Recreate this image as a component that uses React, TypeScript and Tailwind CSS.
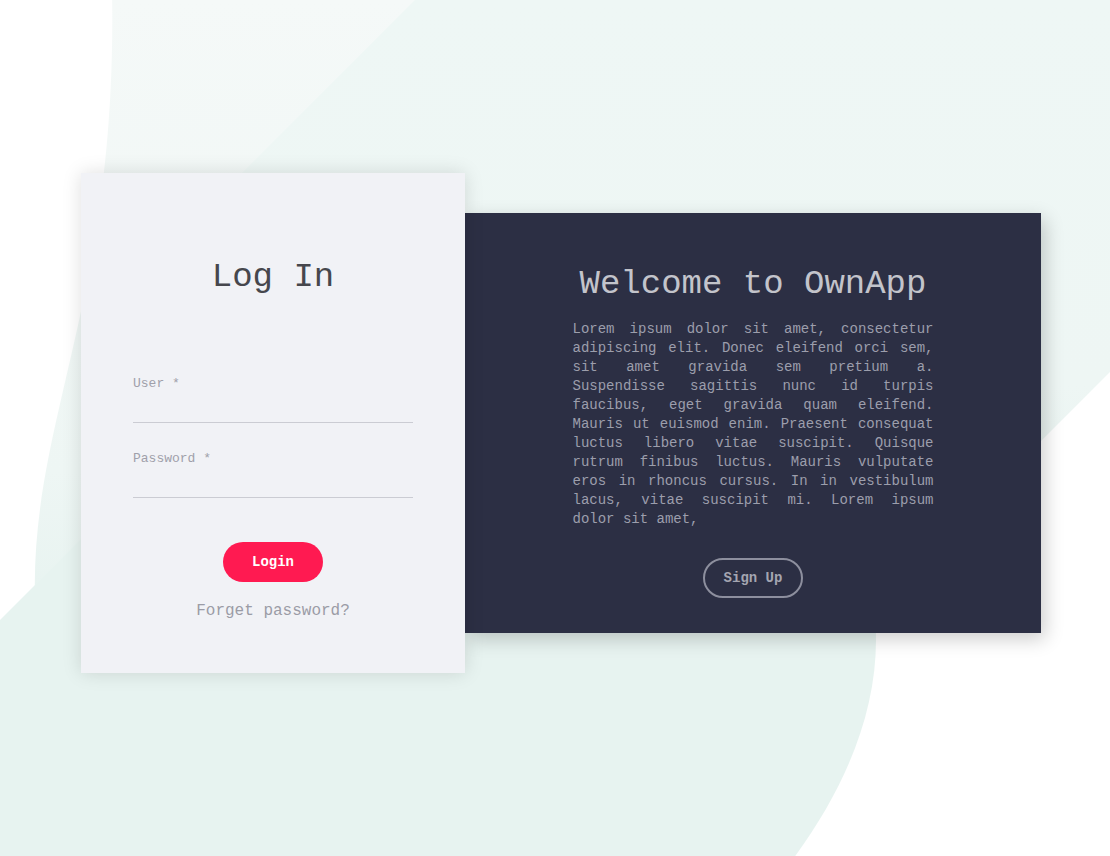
const mono = "font-['Liberation_Mono','DejaVu_Sans_Mono',monospace]"

function Backdrop() {
  return (
    <svg
      className="absolute inset-0 w-full h-full"
      viewBox="0 0 1110 856"
      preserveAspectRatio="none"
    >
      <defs>
        <linearGradient id="blob" gradientUnits="userSpaceOnUse" x1="0" y1="0" x2="0" y2="856">
          <stop offset="0" stopColor="#f5f9f8" />
          <stop offset="0.55" stopColor="#eef6f4" />
          <stop offset="0.72" stopColor="#e7f3f0" />
          <stop offset="1" stopColor="#e7f3f0" />
        </linearGradient>
        <linearGradient id="band" gradientUnits="userSpaceOnUse" x1="0" y1="0" x2="0" y2="856">
          <stop offset="0" stopColor="#eef7f5" />
          <stop offset="0.45" stopColor="#eef6f4" />
          <stop offset="0.62" stopColor="#e7f3f0" />
          <stop offset="1" stopColor="#e7f3f0" />
        </linearGradient>
      </defs>
      <path
        d="M112 -10 C118 300 30 420 35 600 L 0 900 L 760 900 C 830 820 876 730 876 640 C 876 400 800 200 700 -10 Z"
        fill="url(#blob)"
      />
      <polygon
        points="415,0 1110,0 1110,372 626,856 0,856 0,620 85,535 240,175"
        fill="url(#band)"
      />
    </svg>
  )
}

function Field({ label }: { label: string }) {
  return (
    <label className="block">
      <span className="block text-[13px] leading-4 text-[#a0a0aa]">
        {label} <span>*</span>
      </span>
      <input className="block w-full h-[31px] bg-transparent outline-none border-b border-[#cbccd3] text-[14px] text-[#444]" />
    </label>
  )
}

export default function App() {
  return (
    <div className={`relative w-full h-[856px] overflow-hidden bg-white ${mono}`}>
      <Backdrop />

      <div className="relative flex items-center h-full pl-[81px] pb-[10px]">
        {/* Login card */}
        <div className="relative z-10 w-[384px] h-[500px] bg-[#f1f2f6] px-[52px] pt-[84px] shadow-[0_0_18px_rgba(0,0,0,0.13)]">
          <h1 className="text-center text-[34px] leading-[40px] text-[#46474d]">Log In</h1>

          <div className="mt-[79px]">
            <Field label="User" />
          </div>
          <div className="mt-[28px]">
            <Field label="Password" />
          </div>

          <div className="flex flex-col items-center">
            <button className="mt-[44px] w-[100px] h-[40px] rounded-full bg-[#ff1a51] text-white text-[14px] font-bold">
              Login
            </button>
            <a className="mt-[19px] text-[16px] leading-5 text-[#9b9ca6]">Forget password?</a>
          </div>
        </div>

        {/* Welcome card */}
        <div className="w-[576px] h-[420px] bg-[#2c2f44] pt-[51px] flex flex-col items-center shadow-[4px_6px_18px_rgba(0,0,0,0.2)]">
          <h2 className="text-[34px] leading-[40px] text-[#c3c4cb]">Welcome to OwnApp</h2>
          <p className="mt-[16px] w-[361px] text-justify text-[14px] leading-[19px] text-[#9c9eac]">
            Lorem ipsum dolor sit amet, consectetur adipiscing elit. Donec eleifend orci sem, sit amet
            gravida sem pretium a. Suspendisse sagittis nunc id turpis faucibus, eget gravida quam
            eleifend. Mauris ut euismod enim. Praesent consequat luctus libero vitae suscipit. Quisque
            rutrum finibus luctus. Mauris vulputate eros in rhoncus cursus. In in vestibulum lacus, vitae
            suscipit mi. Lorem ipsum dolor sit amet,
          </p>
          <button className="mt-[29px] w-[100px] h-[40px] rounded-full border-2 border-[#8d8f9e] text-[14px] font-bold text-[#a4a5b1]">
            Sign Up
          </button>
        </div>
      </div>
    </div>
  )
}
